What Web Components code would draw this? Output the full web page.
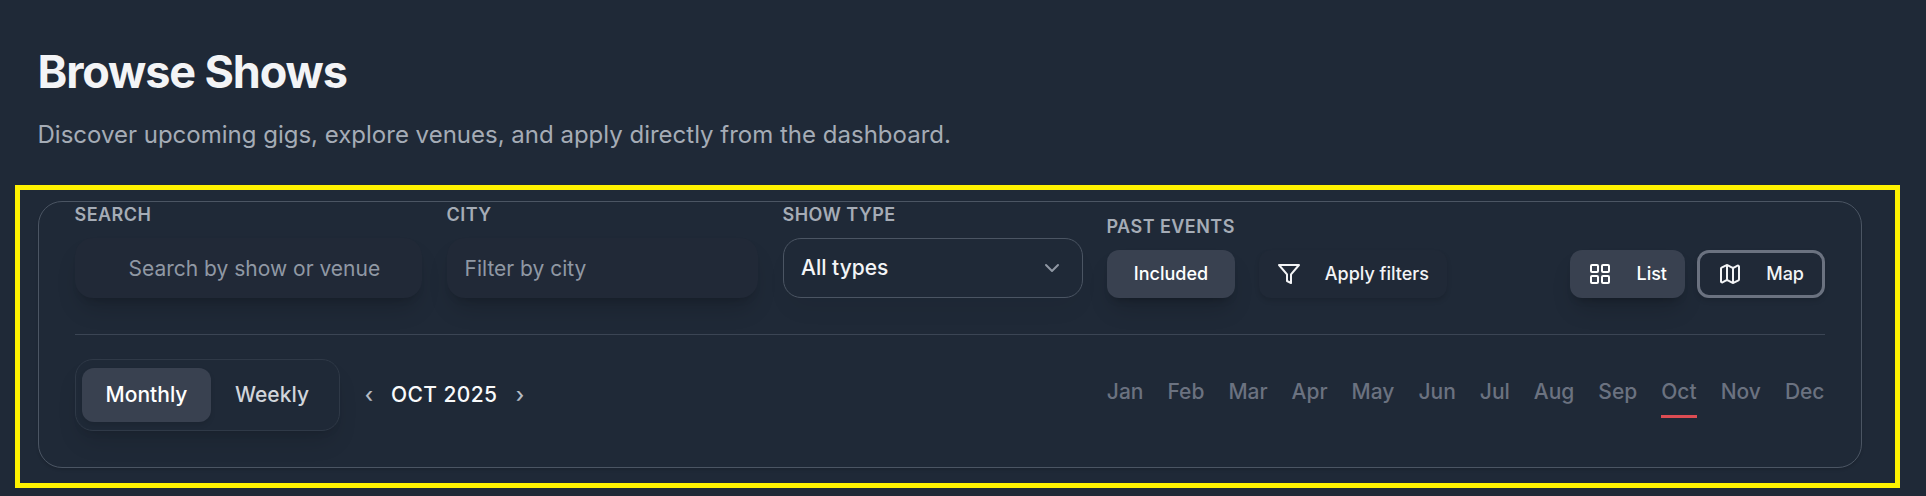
<!DOCTYPE html>
<html lang="en">
<head>
<meta charset="utf-8">
<title>Browse Shows</title>
<style>
body { margin: 0; background: #1f2937; font-family: Inter, "Liberation Sans", sans-serif; color: #f3f4f6; }
</style>
</head>
<body>
<shows-page></shows-page>
<script>
const define = (name, html, setup) => customElements.define(name, class extends HTMLElement {
  constructor() {
    super();
    const t = document.createElement('template');
    t.innerHTML = '<style>*{box-sizing:border-box}:host{box-sizing:border-box}</style>' + html;
    this.attachShadow({ mode: 'open' }).append(t.content.cloneNode(true));
  }
  connectedCallback() { if (setup) setup(this, this.shadowRoot); }
});

define('page-heading', `
<style>
:host { display: block; }
h1 { margin: 0; font-size: 45px; line-height: 54px; font-weight: 700; letter-spacing: -1.125px; color: #f3f4f6; }
p { margin: 18px 0 0; font-size: 24px; line-height: 36px; color: #a5acb6; }
</style>
<h1><slot name="title"></slot></h1>
<p><slot></slot></p>`);

define('form-field', `
<style>
:host { display: flex; flex-direction: column; flex: none; }
label { margin-left: -.5px; font-size: 18px; line-height: 24px; font-weight: 600; letter-spacing: .45px; color: #a5acb6; white-space: nowrap; }
.control { margin-top: 11px; }
</style>
<label><slot name="label"></slot></label>
<div class="control"><slot></slot></div>`);

define('text-input', `
<style>
:host { display: block; }
input { display: block; width: 100%; height: 60px; padding: 0 17.5px; border: 0; border-radius: 18px; background: #212937;
  font: 400 21px/30px Inter, "Liberation Sans", sans-serif; color: #f3f4f6; box-shadow: 0 15px 23px -5px rgba(0,0,0,.16), 0 6px 9px -6px rgba(0,0,0,.2); }
:host([icon]) input { padding-left: 53.5px; }
input::placeholder { color: #9098a4; opacity: 1; }
</style>
<input type="text">`, (h, r) => { r.querySelector('input').placeholder = h.getAttribute('placeholder'); });

define('select-box', `
<style>
:host { display: flex; align-items: center; justify-content: space-between; height: 60px; padding: 0 22px 0 17px;
  border: 1px solid #4b5563; border-radius: 18px; font-size: 21px; line-height: 30px; font-weight: 500; color: #f3f4f6;
  box-shadow: 0 15px 23px -5px rgba(0,0,0,.05); background: #1f2937; }
svg { display: block; }
</style>
<slot></slot>
<svg width="16" height="10" viewBox="0 0 16 10" fill="none" stroke="#8f97a3" stroke-width="2" stroke-linecap="round" stroke-linejoin="round"><path d="M2 2l6 6 6-6"/></svg>`);

const icons = {
  filter: '<path d="M22 3H2l8 9.46V19l4 2v-8.54z"/>',
  grid: '<rect x="3" y="3" width="7" height="7" rx="1"/><rect x="14" y="3" width="7" height="7" rx="1"/><rect x="3" y="14" width="7" height="7" rx="1"/><rect x="14" y="14" width="7" height="7" rx="1"/>',
  map: '<path d="M14.106 5.553a2 2 0 0 0 1.788 0l3.659-1.83A1 1 0 0 1 21 4.619v12.764a1 1 0 0 1-.553.894l-4.553 2.277a2 2 0 0 1-1.788 0l-4.212-2.106a2 2 0 0 0-1.788 0l-3.659 1.83A1 1 0 0 1 3 19.381V6.618a1 1 0 0 1 .553-.894l4.553-2.277a2 2 0 0 1 1.788 0z"/><path d="M15 5.764v15M9 3.236v15"/>'
};
define('action-button', `
<style>
:host { display: block; flex: none; }
button { display: flex; align-items: center; width: 100%; height: 48px; padding: 0; border: 0; border-radius: 12px; background: #202937;
  font: 500 18px/24px Inter, "Liberation Sans", sans-serif; color: #f3f4f6; white-space: nowrap; box-shadow: 0 3px 5px rgba(0,0,0,.12); }
:host([variant="solid"]) button { background: #394150; color: #fff; box-shadow: 0 15px 23px -5px rgba(0,0,0,.16), 0 6px 9px -6px rgba(0,0,0,.3); }
:host([variant="outline"]) button { border: 3px solid #6b7280; }
:host(:not([icon])) button { justify-content: center; }
:host([icon]) button { justify-content: space-between; padding: 0 18px; }
svg { display: none; fill: none; stroke: currentColor; stroke-width: 2; stroke-linecap: round; stroke-linejoin: round; }
:host([icon]) svg { display: block; }
</style>
<button type="button"><svg width="24" height="24" viewBox="0 0 24 24"></svg><slot></slot></button>`, (h, r) => {
  const i = h.getAttribute('icon');
  if (i) r.querySelector('svg').innerHTML = icons[i];
});

define('view-toggle', `
<style>
:host { display: flex; width: 265px; height: 72px; padding: 8px 6px; border: 1px solid #2f3947; border-radius: 18px; flex: none;
  box-shadow: 0 15px 23px -5px rgba(0,0,0,.12), 0 6px 9px -6px rgba(0,0,0,.12); background: #1f2937; }
button { height: 54px; padding: 0; border: 0; border-radius: 12px; background: none; font: 500 21px/30px Inter, "Liberation Sans", sans-serif; color: #d1d5db; }
.on { width: 129px; background: #394150; color: #fff; box-shadow: 0 3px 5px rgba(0,0,0,.1); }
.off { width: 122px; }
</style>
<button class="on">Monthly</button><button class="off">Weekly</button>`);

define('period-stepper', `
<style>
:host { display: flex; align-items: center; font-size: 21px; line-height: 30px; font-weight: 500; color: #f9fafb; white-space: nowrap; }
i { font-style: normal; color: #b4bac3; width: 10px; text-align: center; display: flex; justify-content: center; }
b { font-weight: 500; margin: 0 17.5px 0 17px; letter-spacing: .4px; }
</style>
<i>‹</i><b><slot></slot></b><i>›</i>`);

define('month-strip', `
<style>
:host { display: flex; gap: 24px; font-size: 21px; line-height: 30px; font-weight: 500; color: #6b7280; }
span { padding-bottom: 8px; border-bottom: 3px solid transparent; }
.on { border-color: #dc4c53; }
</style>`, (h, r) => {
  for (const m of ['Jan','Feb','Mar','Apr','May','Jun','Jul','Aug','Sep','Oct','Nov','Dec']) {
    const s = document.createElement('span');
    s.textContent = m;
    if (m === h.getAttribute('current')) s.className = 'on';
    r.append(s);
  }
});

define('filter-card', `
<style>
:host { display: flex; flex-direction: column; height: 267px; padding: 0 36px; border: 1px solid #4b5563; border-radius: 24px; box-shadow: 0 2px 3px rgba(0,0,0,.12); }
.top { display: flex; align-items: flex-end; height: 133px; padding-bottom: 36px; border-bottom: 1px solid #3b4554; }
.bottom { display: flex; align-items: center; justify-content: space-between; padding-top: 24px; }
</style>
<div class="top"><slot name="filters"></slot></div>
<div class="bottom"><slot name="period"></slot></div>`);

define('shows-page', `
<style>
:host { display: block; position: relative; height: 496px; padding: 45px 64px 0 38px; overflow: hidden; }
page-heading { margin-left: -.5px; }
filter-card { margin-top: 48px; }
.frame { position: absolute; left: 15px; top: 185px; width: 1885px; height: 303px; border: 5px solid #fff200; pointer-events: none; }
.group { display: flex; align-items: flex-end; width: 100%; }
.left { display: flex; align-items: center; gap: 24px; }
.views { display: flex; gap: 12px; margin-left: auto; }
month-strip { margin: 4px .5px 0 0; }
</style>
<page-heading><span slot="title">Browse Shows</span>Discover upcoming gigs, explore venues, and apply directly from the dashboard.</page-heading>
<filter-card>
  <div class="group" slot="filters">
    <form-field style="width:347px;margin-right:25px"><span slot="label">SEARCH</span><text-input icon placeholder="Search by show or venue"></text-input></form-field>
    <form-field style="width:311px;margin-right:25px"><span slot="label">CITY</span><text-input placeholder="Filter by city"></text-input></form-field>
    <form-field style="width:300px;margin-right:24px"><span slot="label">SHOW TYPE</span><select-box>All types</select-box></form-field>
    <form-field style="width:128px;margin-right:24px"><span slot="label">PAST EVENTS</span><action-button variant="solid">Included</action-button></form-field>
    <action-button icon="filter" style="width:188px">Apply filters</action-button>
    <div class="views">
      <action-button icon="grid" variant="solid" style="width:115px">List</action-button>
      <action-button icon="map" variant="outline" style="width:128px">Map</action-button>
    </div>
  </div>
  <div class="left" slot="period"><view-toggle></view-toggle><period-stepper>OCT 2025</period-stepper></div>
  <month-strip slot="period" current="Oct"></month-strip>
</filter-card>
<div class="frame"></div>`);
</script>
</body>
</html>
